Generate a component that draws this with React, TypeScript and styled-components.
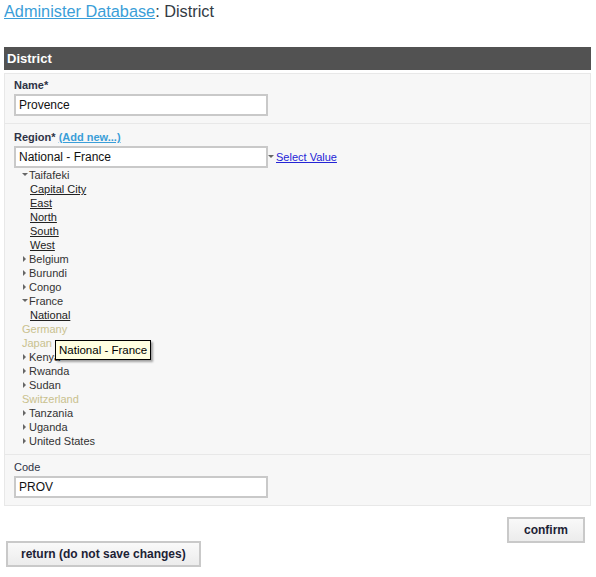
import styled, { createGlobalStyle } from "styled-components";

const GlobalStyle = createGlobalStyle`
  * { box-sizing: border-box; }
  body {
    margin: 0;
    background: #fff;
    font-family: "Liberation Sans", Arial, sans-serif;
    color: #333;
  }
`;

type Node = {
  label: string;
  open?: boolean;
  disabled?: boolean;
  children?: string[];
};

const tree: Node[] = [
  { label: "Taifafeki", open: true, children: ["Capital City", "East", "North", "South", "West"] },
  { label: "Belgium" },
  { label: "Burundi" },
  { label: "Congo" },
  { label: "France", open: true, children: ["National"] },
  { label: "Germany", disabled: true },
  { label: "Japan", disabled: true },
  { label: "Kenya" },
  { label: "Rwanda" },
  { label: "Sudan" },
  { label: "Switzerland", disabled: true },
  { label: "Tanzania" },
  { label: "Uganda" },
  { label: "United States" },
];

function App() {
  return (
    <Page>
      <GlobalStyle />
      <Title>
        <TitleLink href="#">Administer Database</TitleLink>: District
      </Title>
      <Panel>
        <PanelHead>District</PanelHead>
        <Fields>
          <Field $top={3} $bottom={7}>
            <Label>Name*</Label>
            <TextBox defaultValue="Provence" />
          </Field>
          <Field $top={5} $bottom={6}>
            <Label>
              Region* <AddLink href="#">(Add new...)</AddLink>
            </Label>
            <SelectRow>
              <TextBox defaultValue="National - France" />
              <DropArrow />
              <SelectLink href="#">Select Value</SelectLink>
            </SelectRow>
            <Tree>
              {tree.map((n) => (
                <li key={n.label}>
                  <TreeRow $disabled={n.disabled}>
                    {!n.disabled && <Toggle $open={n.open} />}
                    {n.label}
                  </TreeRow>
                  {n.open && n.children && (
                    <SubList>
                      {n.children.map((c) => (
                        <li key={c}>
                          <LeafLink href="#">{c}</LeafLink>
                        </li>
                      ))}
                    </SubList>
                  )}
                </li>
              ))}
              <Tip>National - France</Tip>
            </Tree>
          </Field>
          <Field $top={4} $bottom={7}>
            <Label $plain>Code</Label>
            <TextBox defaultValue="PROV" />
          </Field>
        </Fields>
      </Panel>
      <Actions>
        <Button $right>confirm</Button>
        <Button>return (do not save changes)</Button>
      </Actions>
    </Page>
  );
}

const Page = styled.div`
  padding: 0 5px 0 4px;
  width: 596px;
`;

const Title = styled.h1`
  margin: 0;
  padding-top: 1px;
  font-size: 16.3px;
  line-height: 20px;
  font-weight: normal;
  color: #333a44;
`;

const TitleLink = styled.a`
  color: #3a9ed8;
  text-decoration: underline;
`;

const Panel = styled.div`
  margin-top: 26px;
  width: 587px;
`;

const PanelHead = styled.div`
  height: 23px;
  background: #525252;
  color: #fff;
  font-weight: bold;
  font-size: 13px;
  line-height: 24px;
  padding-left: 3px;
`;

const Fields = styled.div`
  margin-top: 3px;
  border: 1px solid #e8e8e8;
  border-bottom-width: 0;
`;

const Field = styled.div<{ $top: number; $bottom: number }>`
  background: #f7f7f7;
  border-bottom: 1px solid #e8e8e8;
  padding: ${(p) => p.$top}px 9px ${(p) => p.$bottom}px;
`;

const Label = styled.div<{ $plain?: boolean }>`
  font-size: 11px;
  line-height: 16px;
  font-weight: ${(p) => (p.$plain ? "normal" : "bold")};
  color: #2e3346;
  margin-bottom: 1px;
`;

const AddLink = styled.a`
  color: #3a9ed8;
  text-decoration: underline;
`;

const TextBox = styled.input`
  display: block;
  width: 254px;
  height: 22px;
  border: 2px solid #c9c9c9;
  background: #fff;
  padding: 0 3px;
  font-family: "Liberation Sans", Arial, sans-serif;
  font-size: 12px;
  color: #111;
  outline: none;
`;

const SelectRow = styled.div`
  display: flex;
  align-items: center;
`;

const DropArrow = styled.span`
  width: 0;
  height: 0;
  margin: 0 2px 0 0;
  border-left: 3px solid transparent;
  border-right: 3px solid transparent;
  border-top: 3px solid #666;
  position: relative;
  top: -1px;
`;

const SelectLink = styled.a`
  color: #2424d6;
  font-size: 11px;
  text-decoration: underline;
`;

const Tree = styled.ul`
  list-style: none;
  margin: 0;
  padding: 0 0 0 8px;
  position: relative;
  font-size: 11px;
  line-height: 14px;
`;

const TreeRow = styled.div<{ $disabled?: boolean }>`
  display: flex;
  align-items: center;
  color: ${(p) => (p.$disabled ? "#c9c18e" : "#333")};
  height: 14px;
`;

const Toggle = styled.span<{ $open?: boolean }>`
  width: 7px;
  height: 14px;
  flex: none;
  position: relative;
  &::before {
    content: "";
    position: absolute;
    ${(p) =>
      p.$open
        ? `left: 0; top: 5px;
           border-left: 3px solid transparent;
           border-right: 3px solid transparent;
           border-top: 3px solid #666;`
        : `left: 1px; top: 4px;
           border-top: 3px solid transparent;
           border-bottom: 3px solid transparent;
           border-left: 3px solid #666;`}
  }
`;

const SubList = styled.ul`
  list-style: none;
  margin: 0;
  padding: 0 0 0 8px;
`;

const LeafLink = styled.a`
  color: #222;
  text-decoration: underline;
`;

const Tip = styled.div`
  position: absolute;
  left: 41px;
  top: 172px;
  padding: 0 3px;
  height: 20px;
  line-height: 18px;
  font-size: 11.5px;
  color: #000;
  background: #ffffe1;
  border: 1px solid #000;
  box-shadow: 2px 2px 2px rgba(0, 0, 0, 0.35);
  white-space: nowrap;
`;

const Actions = styled.div`
  display: flex;
  flex-direction: column;
  padding: 11px 6px 0 2px;
`;

const Button = styled.button<{ $right?: boolean }>`
  align-self: ${(p) => (p.$right ? "flex-end" : "flex-start")};
  margin-top: ${(p) => (p.$right ? "0" : "-2px")};
  height: 26px;
  padding: 0 ${(p) => (p.$right ? "15px" : "13px")};
  background: linear-gradient(#f9f9f9, #ececec);
  border: 2px solid #c9c9c9;
  font-family: "Liberation Sans", Arial, sans-serif;
  font-weight: bold;
  font-size: 12px;
  color: #1c2235;
`;

export default App;
